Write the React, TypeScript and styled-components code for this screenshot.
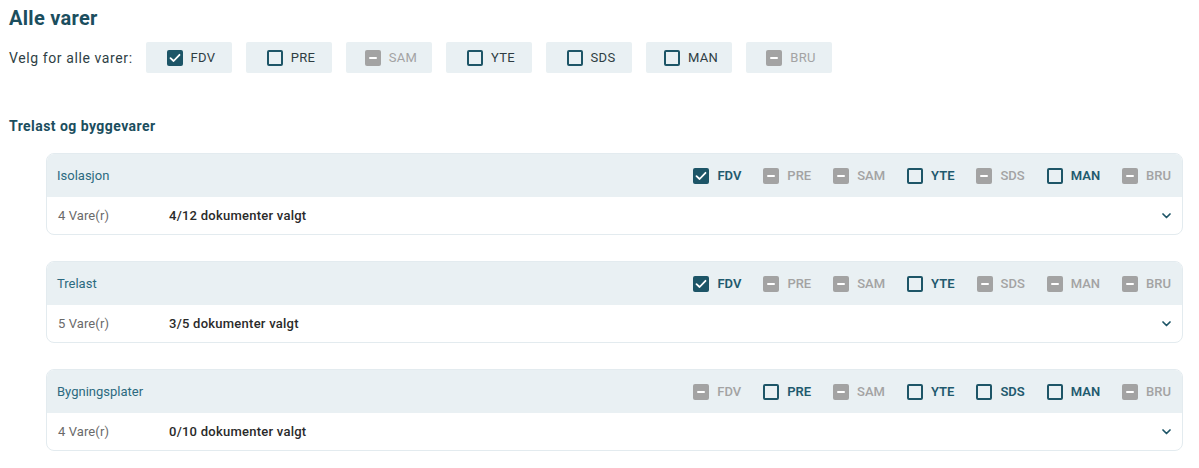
import React from "react";
import styled, { createGlobalStyle } from "styled-components";

const GlobalStyle = createGlobalStyle`
  html, body { margin: 0; padding: 0; background: #ffffff; }
  body { font-family: Roboto, "Noto Sans", "Liberation Sans", sans-serif; color: #333; }
  * { box-sizing: border-box; }
`;

type State = "on" | "off" | "dis";
const CODES = ["FDV", "PRE", "SAM", "YTE", "SDS", "MAN", "BRU"];

const Page = styled.div`
  padding: 7px 16px 0 9px;
  display: flex;
  flex-direction: column;
`;

const Title = styled.h1`
  margin: 0;
  font-size: 20px;
  line-height: 22px;
  font-weight: 700;
  color: #1b4e5e;
  letter-spacing: 0.3px;
`;

const AllRow = styled.div`
  display: flex;
  align-items: center;
  margin-top: 13px;
`;

const AllLabel = styled.span`
  font-size: 14px;
  color: #2f3f45;
  letter-spacing: 0.6px;
  width: 137px;
`;

const AllButtons = styled.div`
  display: flex;
  gap: 14px;
`;

const AllButton = styled.button<{ $state: State }>`
  width: 86px;
  height: 31px;
  border: none;
  border-radius: 2px;
  background: #e9f0f3;
  display: flex;
  align-items: center;
  justify-content: center;
  gap: 8px;
  padding: 0 0 0 4px;
  font-family: inherit;
  font-size: 13px;
  letter-spacing: 0.3px;
  color: ${(p) => (p.$state === "dis" ? "#a3a3a3" : "#2e3d43")};
  cursor: pointer;
`;

const Box = styled.span<{ $state: State }>`
  width: 16px;
  height: 16px;
  border-radius: 2px;
  flex: none;
  display: inline-flex;
  align-items: center;
  justify-content: center;
  background: ${(p) =>
    p.$state === "on" ? "#1d5567" : p.$state === "dis" ? "#a3a3a3" : "transparent"};
  border: ${(p) => (p.$state === "off" ? "2px solid #1d5567" : "none")};
`;

const Dash = styled.span`
  width: 8px;
  height: 2px;
  background: #fff;
  border-radius: 1px;
`;

const Section = styled.h2`
  margin: 44px 0 0;
  font-size: 14px;
  line-height: 18px;
  font-weight: 700;
  color: #1b4e5e;
  letter-spacing: 0.45px;
`;

const Cards = styled.div`
  display: flex;
  flex-direction: column;
  gap: 26px;
  margin: 18px 0 0 37px;
`;

const Card = styled.div`
  border: 1px solid #e3ebef;
  border-radius: 8px;
  overflow: hidden;
  background: #fff;
`;

const CardHead = styled.div`
  height: 43px;
  background: #e9f0f3;
  display: flex;
  align-items: center;
  padding: 0 11px 0 10px;
`;

const CardTitle = styled.span`
  flex: 1;
  font-size: 13px;
  color: #2c6a80;
`;

const Checks = styled.div`
  display: flex;
  align-items: center;
  gap: 22px;
`;

const Check = styled.label<{ $state: State }>`
  display: flex;
  align-items: center;
  gap: 8px;
  font-size: 13px;
  font-weight: ${(p) => (p.$state === "dis" ? 500 : 600)};
  color: ${(p) => (p.$state === "dis" ? "#a3a3a3" : "#1f5a6e")};
`;

const CardBody = styled.div`
  height: 37px;
  display: flex;
  align-items: center;
  padding: 0 11px 0 11px;
`;

const Count = styled.span`
  width: 111px;
  font-size: 13px;
  color: #6a6a6a;
  letter-spacing: 0.1px;
`;

const Docs = styled.span`
  flex: 1;
  font-size: 13px;
  font-weight: 500;
  color: #2a2a2a;
  letter-spacing: 0.25px;
`;

const CheckIcon = () => (
  <svg width="12" height="10" viewBox="0 0 12 10">
    <path d="M1.5 5.2 L4.6 8 L10.5 1.8" fill="none" stroke="#fff" strokeWidth="1.8" strokeLinecap="round" strokeLinejoin="round" />
  </svg>
);

const Chevron = () => (
  <svg width="9" height="6" viewBox="0 0 9 6">
    <path d="M1 1 L4.5 4.5 L8 1" fill="none" stroke="#1d5567" strokeWidth="1.7" strokeLinecap="round" strokeLinejoin="round" />
  </svg>
);

const CheckBox = ({ state }: { state: State }) => (
  <Box $state={state}>
    {state === "on" && <CheckIcon />}
    {state === "dis" && <Dash />}
  </Box>
);

const topStates: State[] = ["on", "off", "dis", "off", "off", "off", "dis"];

const groups: { name: string; count: string; docs: string; states: State[] }[] = [
  { name: "Isolasjon", count: "4 Vare(r)", docs: "4/12 dokumenter valgt", states: ["on", "dis", "dis", "off", "dis", "off", "dis"] },
  { name: "Trelast", count: "5 Vare(r)", docs: "3/5 dokumenter valgt", states: ["on", "dis", "dis", "off", "dis", "dis", "dis"] },
  { name: "Bygningsplater", count: "4 Vare(r)", docs: "0/10 dokumenter valgt", states: ["dis", "off", "dis", "off", "off", "off", "dis"] },
];

export default function App() {
  return (
    <>
      <GlobalStyle />
      <Page>
        <Title>Alle varer</Title>
        <AllRow>
          <AllLabel>Velg for alle varer:</AllLabel>
          <AllButtons>
            {CODES.map((c, i) => (
              <AllButton key={c} $state={topStates[i]}>
                <CheckBox state={topStates[i]} />
                {c}
              </AllButton>
            ))}
          </AllButtons>
        </AllRow>
        <Section>Trelast og byggevarer</Section>
        <Cards>
          {groups.map((g) => (
            <Card key={g.name}>
              <CardHead>
                <CardTitle>{g.name}</CardTitle>
                <Checks>
                  {CODES.map((c, i) => (
                    <Check key={c} $state={g.states[i]}>
                      <CheckBox state={g.states[i]} />
                      {c}
                    </Check>
                  ))}
                </Checks>
              </CardHead>
              <CardBody>
                <Count>{g.count}</Count>
                <Docs>{g.docs}</Docs>
                <Chevron />
              </CardBody>
            </Card>
          ))}
        </Cards>
      </Page>
    </>
  );
}
